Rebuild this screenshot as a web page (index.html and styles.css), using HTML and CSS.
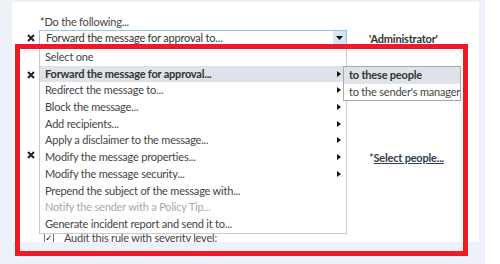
FILE: index.html
```html
<!DOCTYPE html>
<html>
<head>
  <link rel="stylesheet" href="styles.css">
  <title>Rule actions</title>
</head>
<body>
<div class="page">
  <div class="panel">
    <div class="label">*Do the following...</div>

    <div class="row row-action">
      <span class="remove"><svg width="8" height="8" viewBox="0 0 8 8"><path d="M1 1L7 7M7 1L1 7" stroke="#222" stroke-width="2"/></svg></span>
      <div class="select">
        <span class="select-text">Forward the message for approval to...</span>
        <span class="select-btn"><svg width="7" height="4" viewBox="0 0 7 4"><path d="M0 0H7L3.5 4Z" fill="#111"/></svg></span>
      </div>
      <span class="value">'Administrator'</span>
    </div>

    <div class="row row-second">
      <span class="remove"><svg width="8" height="8" viewBox="0 0 8 8"><path d="M1 1L7 7M7 1L1 7" stroke="#222" stroke-width="2"/></svg></span>
    </div>

    <div class="row row-third">
      <span class="remove"><svg width="8" height="8" viewBox="0 0 8 8"><path d="M1 1L7 7M7 1L1 7" stroke="#222" stroke-width="2"/></svg></span>
      <span class="people">*<a href="#">Select people...</a></span>
    </div>

    <div class="audit">
      <span class="check">&#10003;</span>
      <span>Audit this rule with severity level:</span>
    </div>

    <!-- lista desplegable abierta -->
    <ul class="menu">
      <li>Select one</li>
      <li class="active has-sub">Forward the message for approval...</li>
      <li class="has-sub">Redirect the message to...</li>
      <li class="has-sub">Block the message...</li>
      <li class="has-sub">Add recipients...</li>
      <li class="has-sub">Apply a disclaimer to the message...</li>
      <li class="has-sub">Modify the message properties...</li>
      <li class="has-sub">Modify the message security...</li>
      <li>Prepend the subject of the message with...</li>
      <li class="disabled">Notify the sender with a Policy Tip...</li>
      <li>Generate incident report and send it to...</li>
    </ul>

    <ul class="submenu">
      <li class="active">to these people</li>
      <li>to the sender's manager</li>
    </ul>
  </div>
  <div class="annotation"></div>
</div>
</body>
</html>
```

FILE: styles.css
```css
/* Estilos generales */
body {
  margin: 0;
  background-color: #fff;
  font-family: "Lato", "Open Sans", sans-serif;
  font-size: 11px;
  letter-spacing: -0.2px;
  color: #444;
}

.page {
  position: relative;
  width: 485px;
  height: 264px;
  background-color: #edf1f8;
  padding: 2px 0 0 12px;
  box-sizing: border-box;
}

/* Panel blanco */
.panel {
  position: relative;
  width: 467px;
  height: 240px;
  background-color: #fff;
  overflow: hidden;
}

.label {
  padding: 12px 0 0 28px;
  line-height: 16px;
  height: 16px;
}

.row {
  display: flex;
  align-items: center;
  height: 16px;
}

.row-second {
  margin-top: 21px;
}

.row-third {
  margin-top: 64px;
}

.remove {
  width: 27px;
  padding-left: 15px;
  box-sizing: border-box;
  display: flex;
  align-items: center;
}

/* Caja del select */
.select {
  display: flex;
  width: 308px;
  height: 16px;
  border: 1px solid #9ec3e3;
  box-sizing: border-box;
}

.select-text {
  flex: 1;
  padding-left: 6px;
  line-height: 14px;
  color: #333;
}

.select-btn {
  width: 13px;
  background-color: #d6e5f3;
  display: flex;
  align-items: center;
  justify-content: center;
}

.value {
  margin-left: 22px;
  font-weight: bold;
  color: #333;
}

.people {
  margin-left: 330px;
  padding-top: 4px;
  color: #333;
}

.people a {
  font-weight: bold;
  color: #2f3e50;
  text-decoration: underline;
}

.audit {
  display: flex;
  align-items: center;
  gap: 10px;
  margin-top: 68px;
  padding-left: 32px;
  line-height: 14px;
}

.check {
  width: 8px;
  height: 8px;
  border: 1px solid #777;
  font-size: 9px;
  line-height: 8px;
  color: #222;
  text-align: center;
}

/* Lista desplegable */
.menu {
  position: absolute;
  left: 27px;
  top: 44px;
  width: 308px;
  height: 188px;
  margin: 0;
  padding: 3px 0 0 0;
  list-style: none;
  background-color: #fff;
  border: 1px solid #c9c9ce;
  border-top: none;
  box-sizing: border-box;
}

.menu li {
  position: relative;
  height: 16.7px;
  line-height: 16.7px;
  padding-left: 5px;
  color: #444;
}

.menu li.active {
  background-color: #dee2e9;
  font-weight: bold;
  color: #333;
}

.menu li.disabled {
  color: #a8a8a8;
}

.menu li.has-sub::after {
  content: "";
  position: absolute;
  right: 5px;
  top: 5px;
  border-left: 4px solid #111;
  border-top: 3px solid transparent;
  border-bottom: 3px solid transparent;
}

/* Submenu */
.submenu {
  position: absolute;
  left: 331px;
  top: 64px;
  width: 118px;
  height: 35px;
  margin: 0;
  padding: 0;
  list-style: none;
  background-color: #fff;
  border: 1px solid #a9a9ad;
  box-sizing: border-box;
}

.submenu li {
  height: 16.5px;
  line-height: 16.5px;
  padding-left: 5px;
  white-space: nowrap;
  color: #444;
}

.submenu li.active {
  background-color: #dee2e9;
  font-weight: bold;
  color: #333;
}

/* Recuadro rojo */
.annotation {
  position: absolute;
  left: 15px;
  top: 44px;
  width: 453px;
  height: 212px;
  border: 5px solid #ed1c24;
  box-sizing: border-box;
}
```
